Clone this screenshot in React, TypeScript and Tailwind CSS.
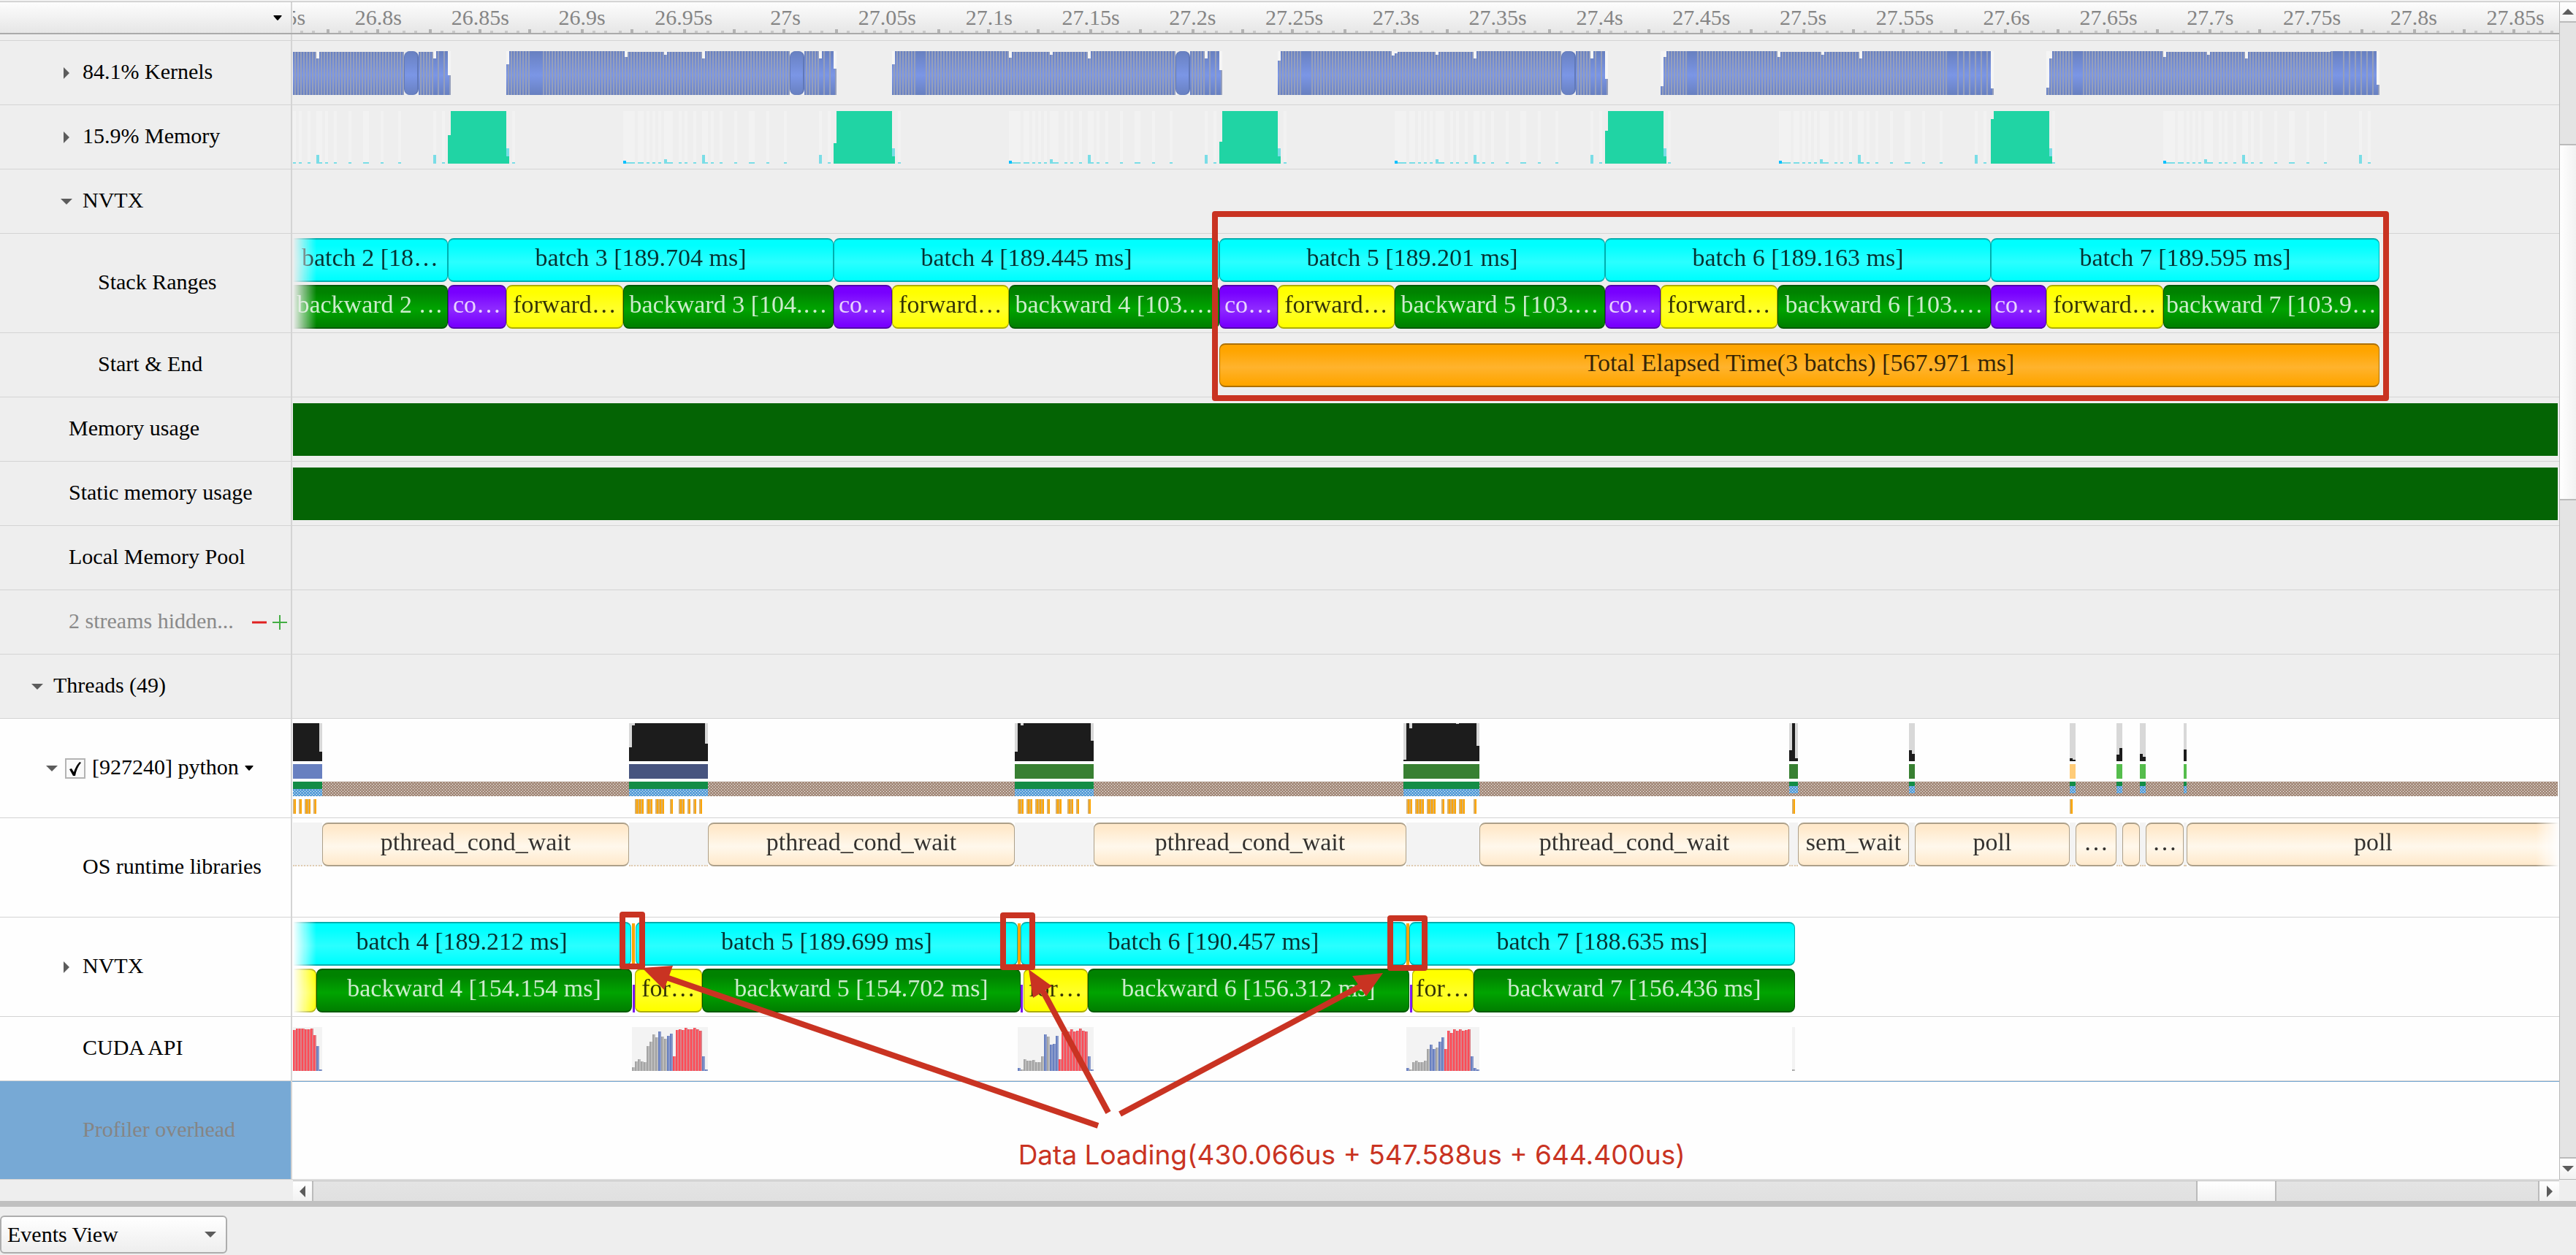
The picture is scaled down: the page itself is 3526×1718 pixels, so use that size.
import React from "react";
import clsx from "clsx";

// the timeline canvas spans X0 .. X0 + SPAN, every track item is placed on that scale
const X0 = 401;
const SPAN = 3102;
const pct = (n: number) => `${(n / SPAN) * 100}%`;

type BarKind = "cyan" | "green" | "purple" | "yellow" | "orange" | "cream" | "gap" | "tick" | "sliver";

type BarItem = {
    kind: BarKind;
    from: number;
    to: number;
    text?: string;
    open?: "left" | "right";
};

const BAR_STYLES: Record<BarKind, string> = {
    cyan: "border-[#00aeae] bg-[linear-gradient(#00ffff_15%,#2affff_55%,#00ffff_95%)] text-black/80",
    green: "border-[#005a00] bg-[linear-gradient(#008200_15%,#00a400_55%,#008200_95%)] text-white/80",
    purple: "border-[#5200ad] bg-[linear-gradient(#7800ff_15%,#8e2aff_55%,#7800ff_95%)] text-white/80",
    yellow: "border-[#adad00] bg-[linear-gradient(#ffff00_15%,#ffff2a_55%,#ffff00_95%)] text-black/80",
    orange: "border-[#ad7000] bg-[linear-gradient(#ffa500_15%,#ffb32d_55%,#ffa500_95%)] text-black/80",
    cream: "border-[#ada089] bg-[linear-gradient(#ffe9cb_10%,#fff8ec_55%,#ffe9cb_100%)] text-black/80",
    gap: "bg-[#f3f3f3] border-[#e0ccb0]",
    tick: "bg-[#ffa500]",
    sliver: "bg-[#7a1af0]",
};

const Lane: React.FC<{ items: BarItem[]; className?: string }> = ({ items, className }) => {
    let cursor = X0;
    return (
        <div className={clsx("flex h-[60px] items-end overflow-hidden", className)}>
            {items.map((item, i) => {
                const offset = item.from - cursor;
                cursor = item.to;
                const boxed = !["gap", "tick", "sliver"].includes(item.kind);
                return (
                    <div
                        key={i}
                        className={clsx(
                            "flex shrink-0 items-center justify-center overflow-hidden whitespace-nowrap text-[34px] leading-[40px]",
                            BAR_STYLES[item.kind],
                            boxed && "h-full border-y-2 pb-[6px]",
                            boxed && !item.open && "rounded-lg border-x",
                            item.open === "left" && "rounded-r-lg border-r",
                            item.open === "right" && "rounded-l-lg border-l",
                            item.kind === "gap" && "h-full border-b-2 border-dotted",
                            item.kind === "tick" && "h-[58px]",
                            item.kind === "sliver" && "h-[38px]",
                        )}
                        style={{ marginLeft: pct(offset), width: pct(item.to - item.from) }}
                    >
                        {item.text}
                    </div>
                );
            })}
        </div>
    );
};

const FADE_LEFT = "[mask-image:linear-gradient(to_right,transparent,black_32px)]";
const FADE_RIGHT = "[mask-image:linear-gradient(to_left,transparent,black_32px)]";

const BATCHES: BarItem[] = [
    { kind: "cyan", from: 401, to: 613, text: "batch 2 [18…", open: "left" },
    { kind: "cyan", from: 613, to: 1141, text: "batch 3 [189.704 ms]" },
    { kind: "cyan", from: 1141, to: 1669, text: "batch 4 [189.445 ms]" },
    { kind: "cyan", from: 1669, to: 2197, text: "batch 5 [189.201 ms]" },
    { kind: "cyan", from: 2197, to: 2725, text: "batch 6 [189.163 ms]" },
    { kind: "cyan", from: 2725, to: 3257, text: "batch 7 [189.595 ms]" },
];

const PHASES: BarItem[] = [
    { kind: "green", from: 401, to: 613, text: "backward 2 …", open: "left" },
    { kind: "purple", from: 613, to: 693, text: "co…" },
    { kind: "yellow", from: 693, to: 853, text: "forward…" },
    { kind: "green", from: 853, to: 1141, text: "backward 3 [104.…" },
    { kind: "purple", from: 1141, to: 1221, text: "co…" },
    { kind: "yellow", from: 1221, to: 1381, text: "forward…" },
    { kind: "green", from: 1381, to: 1669, text: "backward 4 [103.…" },
    { kind: "purple", from: 1669, to: 1749, text: "co…" },
    { kind: "yellow", from: 1749, to: 1909, text: "forward…" },
    { kind: "green", from: 1909, to: 2197, text: "backward 5 [103.…" },
    { kind: "purple", from: 2197, to: 2273, text: "co…" },
    { kind: "yellow", from: 2273, to: 2433, text: "forward…" },
    { kind: "green", from: 2433, to: 2725, text: "backward 6 [103.…" },
    { kind: "purple", from: 2725, to: 2801, text: "co…" },
    { kind: "yellow", from: 2801, to: 2961, text: "forward…" },
    { kind: "green", from: 2961, to: 3257, text: "backward 7 [103.9…" },
];

const ELAPSED: BarItem[] = [
    { kind: "orange", from: 1669, to: 3257, text: "Total Elapsed Time(3 batchs) [567.971 ms]" },
];

const OS_CALLS: BarItem[] = [
    { kind: "gap", from: 401, to: 441 },
    { kind: "cream", from: 441, to: 861, text: "pthread_cond_wait" },
    { kind: "gap", from: 861, to: 969 },
    { kind: "cream", from: 969, to: 1389, text: "pthread_cond_wait" },
    { kind: "gap", from: 1389, to: 1497 },
    { kind: "cream", from: 1497, to: 1925, text: "pthread_cond_wait" },
    { kind: "gap", from: 1925, to: 2025 },
    { kind: "cream", from: 2025, to: 2449, text: "pthread_cond_wait" },
    { kind: "gap", from: 2449, to: 2461 },
    { kind: "cream", from: 2461, to: 2613, text: "sem_wait" },
    { kind: "gap", from: 2613, to: 2621 },
    { kind: "cream", from: 2621, to: 2833, text: "poll" },
    { kind: "gap", from: 2833, to: 2841 },
    { kind: "cream", from: 2841, to: 2897, text: "…" },
    { kind: "gap", from: 2897, to: 2905 },
    { kind: "cream", from: 2905, to: 2929 },
    { kind: "gap", from: 2929, to: 2937 },
    { kind: "cream", from: 2937, to: 2989, text: "…" },
    { kind: "gap", from: 2989, to: 2993 },
    { kind: "cream", from: 2993, to: 3503, text: "poll", open: "right" },
];

const THREAD_BATCHES: BarItem[] = [
    { kind: "cyan", from: 401, to: 864, text: "batch 4 [189.212 ms]", open: "left" },
    { kind: "tick", from: 865, to: 869 },
    { kind: "cyan", from: 870, to: 1393, text: "batch 5 [189.699 ms]" },
    { kind: "tick", from: 1393, to: 1397 },
    { kind: "cyan", from: 1397, to: 1925, text: "batch 6 [190.457 ms]" },
    { kind: "tick", from: 1925, to: 1929 },
    { kind: "cyan", from: 1929, to: 2457, text: "batch 7 [188.635 ms]" },
];

const THREAD_PHASES: BarItem[] = [
    { kind: "yellow", from: 401, to: 433, open: "left" },
    { kind: "green", from: 433, to: 865, text: "backward 4 [154.154 ms]" },
    { kind: "sliver", from: 866, to: 869 },
    { kind: "yellow", from: 869, to: 961, text: "for…" },
    { kind: "green", from: 961, to: 1397, text: "backward 5 [154.702 ms]" },
    { kind: "sliver", from: 1397, to: 1400 },
    { kind: "yellow", from: 1401, to: 1489, text: "for…" },
    { kind: "green", from: 1489, to: 1929, text: "backward 6 [156.312 ms]" },
    { kind: "sliver", from: 1930, to: 1933 },
    { kind: "yellow", from: 1933, to: 2017, text: "for…" },
    { kind: "green", from: 2017, to: 2457, text: "backward 7 [156.436 ms]" },
];

const Chart: React.FC<{ height: number; className: string; children: React.ReactNode }> = ({
    height,
    className,
    children,
}) => (
    <svg
        viewBox={`${X0} 0 ${SPAN} ${height}`}
        preserveAspectRatio="none"
        shapeRendering="crispEdges"
        aria-hidden="true"
        className={clsx("block w-full", className)}
    >
        {children}
    </svg>
);

// [x, top] pairs: each one holds until the next
const KERNEL_GROUPS = [
    { steps: [[401, 1], [433, 10], [437, 1], [593, 10], [597, 0], [613, 33]], end: 617, solids: [], pill: 553 },
    { steps: [[693, 18], [697, 0], [855, 8], [859, 1], [909, 5], [913, 1], [961, 10], [965, 0], [1121, 10], [1125, 0], [1141, 24]], end: 1145, solids: [[725, 741]], pill: 1081 },
    { steps: [[1221, 18], [1225, 0], [1381, 9], [1385, 1], [1437, 5], [1441, 1], [1489, 10], [1493, 0], [1649, 10], [1653, 0], [1669, 26]], end: 1673, solids: [[1253, 1267]], pill: 1609 },
    { steps: [[1749, 13], [1753, 0], [1905, 6], [1909, 3], [1913, 1], [1965, 5], [1969, 1], [2017, 10], [2021, 0], [2177, 10], [2181, 0], [2197, 38]], end: 2201, solids: [[1781, 1795]], pill: 2137 },
    { steps: [[2273, 48], [2277, 8], [2281, 0], [2433, 8], [2437, 1], [2493, 5], [2497, 1], [2545, 10], [2549, 0], [2661, 0], [2725, 51]], end: 2729, solids: [[2309, 2323], [2665, 2679]], pill: 0 },
    { steps: [[2801, 50], [2805, 10], [2809, 0], [2961, 8], [2965, 1], [3021, 5], [3025, 1], [3073, 10], [3077, 1], [3190, 0], [3253, 46]], end: 3257, solids: [[2837, 2851], [3193, 3207]], pill: 0 },
];

const KernelsChart: React.FC = () => (
    <Chart height={60} className="h-[60px]">
        <defs>
            <linearGradient id="kernel" x1="0" y1="0" x2="0" y2="60" gradientUnits="userSpaceOnUse">
                <stop offset="0" stopColor="#6880c0" />
                <stop offset="0.55" stopColor="#7b96e6" />
                <stop offset="1" stopColor="#6880c0" />
            </linearGradient>
            <pattern id="stripes" x="401" y="0" width="4" height="60" patternUnits="userSpaceOnUse">
                <rect x="2" width="2" height="60" fill="#959fbc" />
            </pattern>
            <pattern id="sparse" x="401" y="0" width="8" height="60" patternUnits="userSpaceOnUse">
                <rect x="6" width="2" height="60" fill="#959fbc" />
            </pattern>
        </defs>
        {KERNEL_GROUPS.map((g) => (
            <g key={g.end}>
                {g.steps.map(([x, top], i) => {
                    const next = i + 1 < g.steps.length ? g.steps[i + 1][0] : g.end;
                    return (
                        <g key={x}>
                            {top > 1 && <rect x={x} width={next - x} height={top} fill="#f5f5f5" />}
                            <rect x={x} y={top} width={next - x} height={60 - top} fill="url(#kernel)" />
                            <rect
                                x={x}
                                y={top}
                                width={next - x}
                                height={60 - top}
                                fill={g.end - x < 90 ? "url(#sparse)" : "url(#stripes)"}
                            />
                        </g>
                    );
                })}
                {g.solids.map(([a, b]) => (
                    <rect key={a} x={a} width={b - a} height="60" fill="url(#kernel)" />
                ))}
                {g.pill > 0 && (
                    <g shapeRendering="auto">
                        <rect x={g.pill} width="20" height="60" fill="#eeeeee" />
                        <rect x={g.pill} width="20" height="60" rx="8" fill="#6078b8" />
                        <rect x={g.pill + 1} width="17" height="60" rx="8" fill="url(#kernel)" />
                    </g>
                )}
            </g>
        ))}
    </Chart>
);

// [offset, width, height] of the small copies inside one batch
const COPIES = [
    [8, 4, 2], [160, 4, 4], [164, 8, 2], [172, 4, 2], [180, 8, 2], [192, 4, 2], [200, 4, 2], [208, 4, 2],
    [216, 4, 6], [220, 8, 2], [236, 4, 2], [244, 4, 2], [256, 4, 2], [268, 4, 12], [272, 4, 2], [280, 4, 2],
    [292, 4, 2], [312, 4, 2], [332, 8, 2], [356, 4, 2], [380, 4, 2], [428, 4, 12], [440, 4, 2],
];

// [start, top of the first step, end]
const TRANSFERS = [
    [613, 33, 693],
    [1141, 44, 1221],
    [1669, 42, 1749],
    [2197, 27, 2277],
    [2725, 11, 2805],
];

const MemoryChart: React.FC = () => (
    <Chart height={72} className="h-[72px]">
        {[165, 693, 1221, 1749, 2275, 2801].map((start) =>
            COPIES.map(([dx, w, h]) => (
                <g key={start + dx}>
                    <rect x={start + dx} width={w} height="72" fill="#f2f2f2" />
                    <rect x={start + dx} y={72 - h} width={w} height={h} fill={h === 4 ? "#00bfff" : "#7adde6"} />
                </g>
            )),
        )}
        {TRANSFERS.map(([a, top, b]) => (
            <g key={a} fill="#20d4a4">
                <rect x={a} y={top} width="4" height={72 - top} />
                <rect x={a + 4} width={b - a - 4} height="72" />
                <rect x={b} y="51" width="4" height="11" fill="#7adde6" />
                <rect x={b} y="62" width="4" height="10" />
            </g>
        ))}
    </Chart>
);

// cuts are [x, width, depth] light notches at the top of the utilisation block
const CPU_BLOCKS = [
    { from: 401, to: 441, fill: "#6880c0", cuts: [[437, 4, 39]] },
    { from: 861, to: 969, fill: "#47547f", cuts: [[861, 4, 33], [865, 4, 3], [965, 4, 28]] },
    { from: 1389, to: 1497, fill: "#388032", cuts: [[1389, 4, 39], [1397, 4, 3], [1493, 4, 24]] },
    { from: 1921, to: 2025, fill: "#388032", cuts: [[1921, 4, 50], [1929, 4, 7], [1993, 4, 1], [2021, 4, 31]] },
    { from: 2449, to: 2461, fill: "#388032", cuts: [[2449, 4, 37], [2457, 4, 48]] },
    { from: 2613, to: 2621, fill: "#388032", cuts: [[2613, 4, 37], [2617, 4, 42]] },
    { from: 2833, to: 2841, fill: "#ffcc78", cuts: [[2833, 4, 48], [2837, 4, 50]] },
    { from: 2897, to: 2905, fill: "#55bd4c", cuts: [[2897, 4, 43], [2901, 4, 34]] },
    { from: 2929, to: 2937, fill: "#55bd4c", cuts: [[2929, 4, 42], [2933, 4, 46]] },
    { from: 2989, to: 2993, fill: "#55bd4c", cuts: [[2989, 4, 36]] },
];

const SAMPLES = [
    [401, 1], [409, 1], [417, 2], [429, 1],
    [869, 3], [885, 2], [897, 3], [917, 1], [929, 2], [941, 1], [949, 1], [957, 1],
    [1393, 2], [1405, 2], [1417, 3], [1433, 1], [1445, 2], [1461, 2], [1473, 1], [1489, 1],
    [1925, 2], [1937, 3], [1953, 3], [1973, 1], [1981, 3], [1997, 2], [2017, 1],
    [2453, 1], [2833, 1],
];

const CpuChart: React.FC = () => (
    <Chart height={124} className="h-[124px]">
        <defs>
            <pattern id="waiting" x="401" y="80" width="4" height="4" patternUnits="userSpaceOnUse">
                <rect width="4" height="4" fill="#a58c7c" />
                <rect x="0" y="1" width="1" height="1" fill="#ffffff" />
                <rect x="2" y="3" width="1" height="1" fill="#ffffff" />
            </pattern>
            <pattern id="running" x="401" y="80" width="4" height="4" patternUnits="userSpaceOnUse">
                <rect width="4" height="4" fill="#5a9fd8" />
                <rect x="0" y="1" width="1" height="1" fill="#ffffff" />
                <rect x="2" y="3" width="1" height="1" fill="#ffffff" />
            </pattern>
            <pattern id="samples" x="401" y="0" width="4" height="20" patternUnits="userSpaceOnUse">
                <rect width="2" height="20" fill="#d8af68" />
                <rect x="2" width="2" height="20" fill="#ffa500" />
            </pattern>
        </defs>
        <rect x="401" y="80" width="3100" height="20" fill="url(#waiting)" />
        {CPU_BLOCKS.map((b) => {
            const wide = b.to - b.from > 20;
            return (
                <g key={b.from}>
                    <rect x={b.from} width={b.to - b.from} height="52" fill="#1c1c1c" />
                    {b.cuts.map(([x, w, d]) => (
                        <rect key={x} x={x} width={w} height={d} fill="#d8d8d8" />
                    ))}
                    <rect x={b.from} y="56" width={b.to - b.from} height="20" fill={b.fill} />
                    <rect x={b.from} y="80" width={b.to - b.from} height={wide ? 10 : 6} fill="#148d46" />
                    <rect
                        x={b.from}
                        y={wide ? 90 : 86}
                        width={b.to - b.from}
                        height="10"
                        fill="url(#running)"
                    />
                </g>
            );
        })}
        {SAMPLES.map(([x, n]) => (
            <rect key={x} x={x} y="104" width={n * 4} height="20" fill="url(#samples)" />
        ))}
    </Chart>
);

const CUDA_CALLS = [
    { start: 401, bars: "r56 r58 r58 r58 r57 r57 r58 r49 b34 b2" },
    {
        start: 865,
        bars: "g5 g13 g16 g13 g12 g34 g40 g50 g46 b54 g47 g44 b48 b51 r20 r56 r57 r56 r59 r57 r57 r59 r57 r55 b20 b2",
    },
    {
        start: 1393,
        bars: "b4 g2 g16 g14 g14 g15 g12 g12 g20 b50 g47 b36 b37 b48 r16 r52 r54 r54 r57 r54 r55 r58 r55 r54 b20 b2",
    },
    {
        start: 1925,
        bars: "b4 g2 g12 g14 g12 g12 g14 g30 b36 b30 g32 b40 b46 r30 r55 r52 r57 r55 r57 r55 r56 r57 b20 b4 b2",
    },
    { start: 2453, bars: "g2" },
];

const CALL_COLORS: Record<string, [string, string]> = {
    r: ["#ff4a55", "#dc8088"],
    g: ["#a4a4a4", "#bdbdbd"],
    b: ["#6880c0", "#8c9ccc"],
};

const CudaChart: React.FC = () => (
    <Chart height={60} className="h-[60px]">
        {CUDA_CALLS.map(({ start, bars }) => {
            const list = bars.split(" ");
            return (
                <g key={start}>
                    <rect x={start} width={list.length * 4} height="60" fill="#f3f3f3" />
                    {list.map((bar, i) => {
                        const h = Number(bar.slice(1));
                        const [main, edge] = CALL_COLORS[bar[0]];
                        return (
                            <g key={i}>
                                <rect x={start + i * 4} y={60 - h} width="2" height={h} fill={main} />
                                <rect x={start + i * 4 + 2} y={60 - h} width="2" height={h} fill={edge} />
                            </g>
                        );
                    })}
                </g>
            );
        })}
    </Chart>
);

const TICKS = Array.from({ length: 178 }, (_, i) => i);
const TIMES = Array.from({ length: 23 }, (_, i) => `${Number((26.75 + i * 0.05).toFixed(2))}s`);

const Ruler: React.FC = () => (
    <div className="flex min-w-0 flex-1 flex-col overflow-hidden pl-px">
        <div className="flex h-[37px] shrink-0 overflow-hidden pt-[5px] text-[30px] leading-[32px] text-[#858585]">
            {TIMES.map((time, i) => (
                <div
                    key={time}
                    className="shrink-0 text-center"
                    style={{ width: pct(139.3), marginLeft: i === 0 ? pct(-92) : undefined }}
                >
                    {time}
                </div>
            ))}
        </div>
        <Chart height={5} className="h-[5px]">
            {TICKS.map((i) => {
                const x = 413 + Math.round((i * 17.41) / 4) * 4 - 2;
                const major = i % 4 === 2;
                return (
                    <rect
                        key={i}
                        x={x}
                        y={major ? 0 : 2}
                        width="4"
                        height={major ? 5 : 3}
                        fill={major ? "#b2b2b2" : "#c8c8c8"}
                    />
                );
            })}
        </Chart>
    </div>
);

const ARROWS = {
    right: { box: "0 0 8 16", points: "0,0 8,8 0,16", size: "h-4 w-2" },
    left: { box: "0 0 8 16", points: "8,0 0,8 8,16", size: "h-4 w-2" },
    down: { box: "0 0 16 8", points: "0,0 16,0 8,8", size: "h-2 w-4" },
    up: { box: "0 0 16 8", points: "0,8 16,8 8,0", size: "h-2 w-4" },
};

const Arrow: React.FC<{ dir: keyof typeof ARROWS }> = ({ dir }) => (
    <svg viewBox={ARROWS[dir].box} className={clsx("fill-[#5c5c5c]", ARROWS[dir].size)} aria-hidden="true">
        <polygon points={ARROWS[dir].points} />
    </svg>
);

const SmallArrow: React.FC = () => (
    <svg viewBox="0 0 12 7" className="h-[7px] w-3 fill-black" aria-hidden="true">
        <path d="M1 0h10q1 0 .5 1L7 6.300q-1 1-2 0L.5 1Q0 0 1 0z" />
    </svg>
);

const Toggle: React.FC<{ open?: boolean; name: string }> = ({ open = false, name }) => (
    <button
        type="button"
        aria-label={`Toggle ${name}`}
        aria-expanded={open}
        className="flex h-[30px] w-[30px] shrink-0 items-center justify-center"
    >
        <Arrow dir={open ? "down" : "right"} />
    </button>
);

type RowProps = {
    label: React.ReactNode;
    height?: string;
    cell?: string;
    className?: string;
    track?: string;
    children?: React.ReactNode;
};

const Row: React.FC<RowProps> = ({ label, height = "h-[88px]", cell, className, track, children }) => (
    <div className={clsx("flex border-b border-[#d4d4d4]", height, className)}>
        <div
            className={clsx(
                "flex w-[400px] shrink-0 items-center whitespace-nowrap border-r-2 border-[#d4d4d4] text-[30px] leading-[36px]",
                cell,
            )}
        >
            {label}
        </div>
        <div className={clsx("flex min-w-0 flex-1 flex-col gap-1 pl-px", track)}>{children}</div>
    </div>
);

const Name: React.FC<{ children: React.ReactNode; className?: string }> = ({ children, className }) => (
    <span className={clsx("pb-[3px]", className)}>{children}</span>
);

// red markers and arrows drawn over the rows
const Annotations: React.FC = () => (
    <div className="pointer-events-none absolute inset-y-0 left-[401px] right-0">
        <svg viewBox="401 47 3102 1568" preserveAspectRatio="none" className="h-full w-full" aria-hidden="true">
            <g fill="none" stroke="#c93322" strokeWidth="8" strokeLinejoin="round">
                <rect x="1663" y="293" width="1603" height="252" />
                <rect x="852" y="1252" width="27" height="71" />
                <rect x="1373" y="1253" width="40" height="71" />
                <rect x="1903" y="1257" width="47" height="68" />
                <path d="M1503 1541L912 1338" />
                <path d="M1517 1523L1426 1354" />
                <path d="M1533 1525L1864 1349" />
            </g>
            <g fill="#c93322">
                <polygon points="879,1325 921,1322 909,1355" />
                <polygon points="1408,1327 1440,1350 1414,1366" />
                <polygon points="1893,1332 1851,1336 1870,1364" />
            </g>
        </svg>
        <p className="absolute left-[32%] top-[1510px] whitespace-nowrap font-['Inter'] text-[37px] leading-[48px] text-[#c93322]">
            Data Loading(430.066us + 547.588us + 644.400us)
        </p>
    </div>
);

const SCROLL_BUTTON = "flex shrink-0 items-center justify-center bg-linear-to-b from-white to-[#f2f2f2]";

const App: React.FC = () => {
    return (
        <div className="flex min-h-screen flex-col bg-[#eeeeee] pt-[2px] font-['Liberation_Serif',serif] text-black">
            <div className="flex border-t border-[#bdbdbd]">
                <main className="min-w-0 flex-1">
                    <header className="flex h-[44px] border-b-2 border-[#aaaaaa] bg-linear-to-b from-[#fdfdfd] to-[#e6e6e6]">
                        <div className="flex w-[400px] shrink-0 items-center justify-end border-r-2 border-[#d4d4d4] pr-3">
                            <button type="button" aria-label="Timeline options">
                                <SmallArrow />
                            </button>
                        </div>
                        <Ruler />
                    </header>

                    <div className="relative">
                        <div className="flex h-[9px] border-b border-[#d4d4d4]">
                            <div className="w-[400px] border-r-2 border-[#d4d4d4]" />
                        </div>
                        <Row
                            label={<><Toggle name="Kernels" /><Name className="pl-[7px]">84.1% Kernels</Name></>}
                            cell="pl-[76px]"
                            track="pt-[14px]"
                        >
                            <KernelsChart />
                        </Row>
                        <Row
                            label={<><Toggle name="Memory" /><Name className="pl-[7px]">15.9% Memory</Name></>}
                            cell="pl-[76px]"
                            track="pt-2"
                        >
                            <MemoryChart />
                        </Row>
                        <Row
                            label={<><Toggle open name="NVTX" /><Name className="pl-[7px]">NVTX</Name></>}
                            cell="pl-[76px]"
                        />
                        <Row
                            label={<Name>Stack Ranges</Name>}
                            height="h-[136px]"
                            cell="pl-[134px]"
                            track="pt-[6px]"
                        >
                            <Lane items={BATCHES} className={FADE_LEFT} />
                            <Lane items={PHASES} className={FADE_LEFT} />
                        </Row>
                        <Row label={<Name>Start &amp; End</Name>} cell="pl-[134px]" track="pt-[14px]">
                            <Lane items={ELAPSED} />
                        </Row>
                        <Row label={<Name>Memory usage</Name>} cell="pl-[94px]" track="pr-[2px] pt-2">
                            <div className="h-[72px] bg-[#046404]" />
                        </Row>
                        <Row label={<Name>Static memory usage</Name>} cell="pl-[94px]" track="pr-[2px] pt-2">
                            <div className="h-[72px] bg-[#046404]" />
                        </Row>
                        <Row label={<Name>Local Memory Pool</Name>} cell="pl-[94px]" />
                        <Row
                            label={
                                <>
                                    <Name className="flex-1 text-[#8a8a8a]">2 streams hidden...</Name>
                                    <button type="button" aria-label="Show fewer streams" className="mr-2">
                                        <svg viewBox="0 0 20 20" className="h-5 w-5" aria-hidden="true">
                                            <path d="M0 10h20" stroke="#e02020" strokeWidth="3" />
                                        </svg>
                                    </button>
                                    <button type="button" aria-label="Show more streams" className="mr-[5px]">
                                        <svg viewBox="0 0 20 20" className="h-5 w-5" aria-hidden="true">
                                            <path d="M0 10h20M10 0v20" stroke="#44ae44" strokeWidth="2" />
                                        </svg>
                                    </button>
                                </>
                            }
                            cell="pl-[94px]"
                        />
                        <Row
                            label={<><Toggle open name="Threads" /><Name className="pl-[7px]">Threads (49)</Name></>}
                            cell="pl-[36px]"
                        />

                        <Row
                            label={
                                <>
                                    <Toggle open name="python" />
                                    <label className="flex items-center">
                                        <span className="relative ml-[3px] h-7 w-7">
                                            <input
                                                type="checkbox"
                                                defaultChecked
                                                className="peer block h-7 w-7 appearance-none border-2 border-[#b4b4b4] bg-[#fafafa]"
                                            />
                                            <svg
                                                viewBox="0 0 28 28"
                                                className="pointer-events-none absolute inset-0 hidden peer-checked:block"
                                                aria-hidden="true"
                                            >
                                                <path
                                                    d="M6 15l3-1 3 5q3-9 8-14l2 1q-6 7-8 18h-3z"
                                                    fill="#000000"
                                                />
                                            </svg>
                                        </span>
                                        <Name className="pl-[9px]">[927240] python</Name>
                                    </label>
                                    <button type="button" aria-label="Thread options" className="ml-2">
                                        <SmallArrow />
                                    </button>
                                </>
                            }
                            height="h-[136px]"
                            cell="pl-[56px]"
                            className="bg-[#fefefe]"
                            track="pt-[6px]"
                        >
                            <CpuChart />
                        </Row>
                        <Row
                            label={<Name>OS runtime libraries</Name>}
                            height="h-[136px]"
                            cell="pl-[113px]"
                            className="bg-[#fefefe]"
                            track="pt-[6px]"
                        >
                            <Lane items={OS_CALLS} className={FADE_RIGHT} />
                        </Row>
                        <Row
                            label={<><Toggle name="thread NVTX" /><Name className="pl-[7px]">NVTX</Name></>}
                            height="h-[136px]"
                            cell="pl-[76px]"
                            className="bg-[#fefefe]"
                            track="pt-[6px]"
                        >
                            <Lane items={THREAD_BATCHES} className={FADE_LEFT} />
                            <Lane items={THREAD_PHASES} className={FADE_LEFT} />
                        </Row>
                        <Row
                            label={<Name>CUDA API</Name>}
                            cell="pl-[113px]"
                            className="bg-[#fefefe]"
                            track="pt-[14px]"
                        >
                            <CudaChart />
                        </Row>
                        <Row
                            label={<Name>Profiler overhead</Name>}
                            height="h-[135px]"
                            cell="pl-[113px] bg-[#77a9d5] text-[#858585]"
                            className="border-[#b4b4b4] bg-[#fefefe]"
                            track="border-t border-[#77a9d5]"
                        />
                        <Annotations />
                    </div>
                </main>

                {/* vertical scroll bar */}
                <div className="flex w-[23px] shrink-0 flex-col border-b border-l border-[#b9b9b9] bg-[#e4e4e4]">
                    <button type="button" aria-label="Scroll up" className={clsx(SCROLL_BUTTON, "h-[28px] border-b-2 border-[#bbbbbb]")}>
                        <Arrow dir="up" />
                    </button>
                    <div className="grow-[167] basis-0" />
                    <div className="grow-[486] basis-0 border-y-2 border-[#bbbbbb] bg-linear-to-r from-white to-[#f2f2f2]" />
                    <div className="grow-[902] basis-0" />
                    <button type="button" aria-label="Scroll down" className={clsx(SCROLL_BUTTON, "h-[30px] border-t-2 border-[#bbbbbb]")}>
                        <Arrow dir="down" />
                    </button>
                </div>
            </div>

            {/* horizontal scroll bar */}
            <div className="flex h-[29px] pl-[401px] pr-[23px] pt-px">
                <div className="flex flex-1 border-t border-[#b9b9b9] bg-linear-to-b from-[#e4e4e4] to-[#e0e0e0]">
                    <button type="button" aria-label="Scroll left" className={clsx(SCROLL_BUTTON, "w-[28px] border-r-2 border-[#bbbbbb]")}>
                        <Arrow dir="left" />
                    </button>
                    <div className="grow-[2578] basis-0" />
                    <div className="grow-[106] basis-0 border-x-2 border-[#bbbbbb] bg-linear-to-b from-white to-[#f2f2f2]" />
                    <div className="grow-[358] basis-0" />
                    <button type="button" aria-label="Scroll right" className={clsx(SCROLL_BUTTON, "w-[29px] border-l-2 border-[#bbbbbb]")}>
                        <Arrow dir="right" />
                    </button>
                </div>
            </div>

            <footer className="border-t-8 border-[#c0c0c0] pt-3">
                <div className="relative w-[311px]">
                    <select
                        aria-label="Bottom view"
                        className="block h-[52px] w-full appearance-none rounded-md border-2 border-[#adadad] bg-linear-to-b from-white to-[#eeeeee] pl-2 text-[30px] leading-[36px]"
                    >
                        <option>Events View</option>
                    </select>
                    <div className="pointer-events-none absolute inset-y-0 right-[15px] flex items-center">
                        <Arrow dir="down" />
                    </div>
                </div>
            </footer>
        </div>
    );
};

export default App;
